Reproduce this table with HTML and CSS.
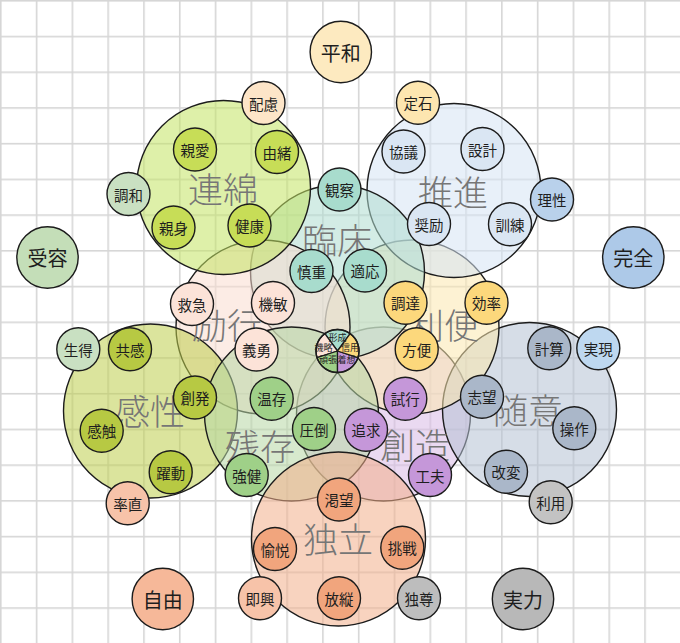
FILE: index.html
```html
<!DOCTYPE html>
<html lang="ja">
<head>
<meta charset="utf-8">
<title>価値観マップ</title>
<link rel="stylesheet" href="styles.css">
</head>
<body>
<main class="board">
<svg class="map" width="680" height="643" viewBox="0 0 680 643" xmlns="http://www.w3.org/2000/svg">
  <defs>
    <pattern id="grid" patternUnits="userSpaceOnUse" width="35.79" height="35.72">
      <rect class="gridline" x="0" y="0" width="1.6" height="35.72"/>
      <rect class="gridline" x="0" y="0" width="35.79" height="1.6"/>
    </pattern>
  </defs>
  <rect class="grid" x="0" y="0" width="680" height="643"/>

  <!-- category circles -->
  <g class="cats">
    <circle class="big f-sozo" cx="383.5" cy="414" r="87"/>
    <circle class="big f-zuii" cx="529.5" cy="409.5" r="87"/>
    <circle class="big f-riben" cx="412" cy="327" r="87"/>
    <circle class="big f-suishin" cx="454" cy="190.5" r="87"/>
    <circle class="big f-rinsho" cx="337.5" cy="272" r="87"/>
    <circle class="big f-reiko" cx="263" cy="327" r="87"/>
    <circle class="big f-renmen" cx="223.5" cy="187.5" r="87"/>
    <circle class="big f-kansei" cx="150.5" cy="411" r="87"/>
    <circle class="big f-zanson" cx="291.5" cy="414" r="87"/>
    <circle class="big f-dokuritsu" cx="338.5" cy="539" r="87"/>
  </g>

  <g class="cat-labels">
    <text class="t-big" x="223" y="187">連綿</text>
    <text class="t-big" x="453" y="190">推進</text>
    <text class="t-big" x="337" y="238">臨床</text>
    <text class="t-big" x="227" y="323">励行</text>
    <text class="t-big" x="444" y="323">利便</text>
    <text class="t-big" x="150" y="409">感性</text>
    <text class="t-big" x="528" y="408">随意</text>
    <text class="t-big" x="260" y="444">残存</text>
    <text class="t-big" x="415" y="443">創造</text>
    <text class="t-big" x="338" y="537">独立</text>
  </g>

  <!-- centre pie -->
  <g class="pie">
    <path class="slice p-teal" d="M337.5 351 L350.14 333.61 A21.5 21.5 0 0 0 324.86 333.61 Z"/>
    <path class="slice p-pink" d="M337.5 351 L324.86 333.61 A21.5 21.5 0 0 0 317.05 357.64 Z"/>
    <path class="slice p-green" d="M337.5 351 L317.05 357.64 A21.5 21.5 0 0 0 337.5 372.5 Z"/>
    <path class="slice p-purple" d="M337.5 351 L337.5 372.5 A21.5 21.5 0 0 0 357.95 357.64 Z"/>
    <path class="slice p-yellow" d="M337.5 351 L357.95 357.64 A21.5 21.5 0 0 0 350.14 333.61 Z"/>
    <circle class="pie-rim" cx="337.5" cy="351" r="21.5"/>
    <text class="t-pie" x="337.5" y="337.5">形成</text>
    <text class="t-pie" x="350" y="347.5">信用</text>
    <text class="t-pie" x="346.5" y="359.5">着想</text>
    <text class="t-pie" x="328" y="359.5">頑張</text>
    <text class="t-pie" x="323.5" y="347.5">機略</text>
  </g>

  <!-- value circles -->
  <g class="values">
    <circle class="sm c-lime" cx="195" cy="149.5" r="21.5"/><text class="t-sm" x="195" y="149.5">親愛</text>
    <circle class="sm c-lime" cx="277" cy="152" r="21.5"/><text class="t-sm" x="277" y="152">由緒</text>
    <circle class="sm c-lime" cx="173.5" cy="227.5" r="21.5"/><text class="t-sm" x="173.5" y="227.5">親身</text>
    <circle class="sm c-lime" cx="249.5" cy="225.5" r="21.5"/><text class="t-sm" x="249.5" y="225.5">健康</text>
    <circle class="sm c-peach" cx="263.5" cy="103" r="21.5"/><text class="t-sm" x="263.5" y="103">配慮</text>
    <circle class="sm c-sage" cx="128.5" cy="194" r="21.5"/><text class="t-sm" x="128.5" y="194">調和</text>

    <circle class="sm c-teal" cx="339.5" cy="189.5" r="21.5"/><text class="t-sm" x="339.5" y="189.5">観察</text>
    <circle class="sm c-teal" cx="311.5" cy="271" r="21.5"/><text class="t-sm" x="311.5" y="271">慎重</text>
    <circle class="sm c-teal" cx="365" cy="270.5" r="21.5"/><text class="t-sm" x="365" y="270.5">適応</text>

    <circle class="sm c-cream" cx="418" cy="102.7" r="21.5"/><text class="t-sm" x="418" y="102.7">定石</text>
    <circle class="sm c-sky" cx="403.5" cy="151.5" r="21.5"/><text class="t-sm" x="403.5" y="151.5">協議</text>
    <circle class="sm c-sky" cx="482.5" cy="149" r="21.5"/><text class="t-sm" x="482.5" y="149">設計</text>
    <circle class="sm c-sky" cx="429" cy="224" r="21.5"/><text class="t-sm" x="429" y="224">奨励</text>
    <circle class="sm c-sky" cx="510" cy="224.3" r="21.5"/><text class="t-sm" x="510" y="224.3">訓練</text>
    <circle class="sm c-blue" cx="552" cy="199.5" r="21.5"/><text class="t-sm" x="552" y="199.5">理性</text>

    <circle class="sm c-pink" cx="192" cy="304" r="21.5"/><text class="t-sm" x="192" y="304">救急</text>
    <circle class="sm c-pink" cx="273" cy="303" r="21.5"/><text class="t-sm" x="273" y="303">機敏</text>
    <circle class="sm c-pink" cx="256.5" cy="349.5" r="21.5"/><text class="t-sm" x="256.5" y="349.5">義勇</text>

    <circle class="sm c-yellow" cx="405.5" cy="302.7" r="21.5"/><text class="t-sm" x="405.5" y="302.7">調達</text>
    <circle class="sm c-yellow" cx="486.5" cy="302.7" r="21.5"/><text class="t-sm" x="486.5" y="302.7">効率</text>
    <circle class="sm c-yellow" cx="416.7" cy="349.3" r="21.5"/><text class="t-sm" x="416.7" y="349.3">方便</text>

    <circle class="sm c-sage" cx="78.3" cy="349.3" r="21.5"/><text class="t-sm" x="78.3" y="349.3">生得</text>
    <circle class="sm c-olive" cx="130" cy="349.3" r="21.5"/><text class="t-sm" x="130" y="349.3">共感</text>
    <circle class="sm c-olive" cx="195" cy="397.5" r="21.5"/><text class="t-sm" x="195" y="397.5">創発</text>
    <circle class="sm c-olive" cx="101.7" cy="430.7" r="21.5"/><text class="t-sm" x="101.7" y="430.7">感触</text>
    <circle class="sm c-olive" cx="170.7" cy="472.3" r="21.5"/><text class="t-sm" x="170.7" y="472.3">躍動</text>

    <circle class="sm c-green" cx="271.7" cy="398.7" r="21.5"/><text class="t-sm" x="271.7" y="398.7">温存</text>
    <circle class="sm c-green" cx="314" cy="429" r="21.5"/><text class="t-sm" x="314" y="429">圧倒</text>
    <circle class="sm c-green" cx="246.7" cy="475" r="21.5"/><text class="t-sm" x="246.7" y="475">強健</text>

    <circle class="sm c-purple" cx="405.3" cy="398.7" r="21.5"/><text class="t-sm" x="405.3" y="398.7">試行</text>
    <circle class="sm c-purple" cx="366" cy="429.7" r="21.5"/><text class="t-sm" x="366" y="429.7">追求</text>
    <circle class="sm c-purple" cx="430" cy="475" r="21.5"/><text class="t-sm" x="430" y="475">工夫</text>

    <circle class="sm c-slate" cx="549.3" cy="348.3" r="21.5"/><text class="t-sm" x="549.3" y="348.3">計算</text>
    <circle class="sm c-slate" cx="482" cy="396.7" r="21.5"/><text class="t-sm" x="482" y="396.7">志望</text>
    <circle class="sm c-slate" cx="574.3" cy="428.3" r="21.5"/><text class="t-sm" x="574.3" y="428.3">操作</text>
    <circle class="sm c-slate" cx="506" cy="471.7" r="21.5"/><text class="t-sm" x="506" y="471.7">改変</text>
    <circle class="sm c-lightblue" cx="598.3" cy="348.3" r="21.5"/><text class="t-sm" x="598.3" y="348.3">実現</text>
    <circle class="sm c-gray" cx="550.7" cy="502.3" r="21.5"/><text class="t-sm" x="550.7" y="502.3">利用</text>

    <circle class="sm c-apricot" cx="127.7" cy="503.3" r="21.5"/><text class="t-sm" x="127.7" y="503.3">率直</text>
    <circle class="sm c-salmon" cx="339" cy="499.5" r="21.5"/><text class="t-sm" x="339" y="499.5">渇望</text>
    <circle class="sm c-salmon" cx="275" cy="549" r="21.5"/><text class="t-sm" x="275" y="549">愉悦</text>
    <circle class="sm c-salmon" cx="402.3" cy="547.7" r="21.5"/><text class="t-sm" x="402.3" y="547.7">挑戦</text>
    <circle class="sm c-salmon" cx="339" cy="598.3" r="21.5"/><text class="t-sm" x="339" y="598.3">放縦</text>
    <circle class="sm c-apricot" cx="260" cy="598.3" r="21.5"/><text class="t-sm" x="260" y="598.3">即興</text>
    <circle class="sm c-gray2" cx="419" cy="598.3" r="21.5"/><text class="t-sm" x="419" y="598.3">独尊</text>
  </g>

  <!-- outer anchors -->
  <g class="anchors">
    <circle class="sm c-heiwa" cx="340.8" cy="52" r="30.7"/><text class="t-corner" x="340.8" y="52">平和</text>
    <circle class="sm c-juyo" cx="47.5" cy="257.5" r="30.7"/><text class="t-corner" x="47.5" y="257.5">受容</text>
    <circle class="sm c-kanzen" cx="633.3" cy="257.5" r="30.7"/><text class="t-corner" x="633.3" y="257.5">完全</text>
    <circle class="sm c-jiyu" cx="162.8" cy="599" r="30.7"/><text class="t-corner" x="162.8" y="599">自由</text>
    <circle class="sm c-jitsuryoku" cx="523" cy="599" r="30.7"/><text class="t-corner" x="523" y="599">実力</text>
  </g>
</svg>
</main>
</body>
</html>
```
FILE: styles.css
```css
html, body {
  margin: 0;
  padding: 0;
  background: #ffffff;
}

.board {
  width: 680px;
  height: 643px;
  overflow: hidden;
}

.map {
  display: block;
  font-family: "Noto Sans CJK JP", "Noto Sans", sans-serif;
}

.grid { fill: url(#grid); }
.gridline { fill: #d6d6d6; }

/* category circles */
.big {
  stroke: #1c1c1c;
  stroke-width: 1.4;
  fill-opacity: 0.55;
}
.f-renmen    { fill: rgb(195, 228, 99); }
.f-suishin   { fill: rgb(213, 228, 244); }
.f-rinsho    { fill: rgb(175, 220, 208); }
.f-reiko     { fill: rgb(250, 220, 208); }
.f-riben     { fill: rgb(251, 231, 175); }
.f-kansei    { fill: rgb(190, 206, 77); }
.f-zanson    { fill: rgb(182, 215, 164); }
.f-sozo      { fill: rgb(217, 186, 230); }
.f-zuii      { fill: rgb(180, 193, 211); }
.f-dokuritsu { fill: rgb(242, 175, 139); }

text {
  text-anchor: middle;
  dominant-baseline: central;
}

.t-big {
  font-size: 35px;
  font-weight: 300;
  fill: #767676;
}
.t-sm {
  font-size: 14.5px;
  fill: #1e1e1e;
}
.t-corner {
  font-size: 20px;
  fill: #1e1e1e;
}
.t-pie {
  font-size: 9px;
  fill: #1e1e1e;
}

/* pie */
.slice {
  stroke: #1c1c1c;
  stroke-width: 1.3;
}
.pie-rim {
  fill: none;
  stroke: #1c1c1c;
  stroke-width: 1.4;
}
.p-teal   { fill: #a8dccd; }
.p-pink   { fill: #fce3d8; }
.p-green  { fill: #9fd088; }
.p-purple { fill: #c597d9; }
.p-yellow { fill: #fcd87c; }

/* value circles */
.sm {
  stroke: #1c1c1c;
  stroke-width: 1.4;
}
.c-lime      { fill: #c7dd57; }
.c-peach     { fill: #fde5c8; }
.c-sage      { fill: #c9e0c2; }
.c-teal      { fill: #a8dccd; }
.c-cream     { fill: #fde6b0; }
.c-sky       { fill: #dae6f3; }
.c-blue      { fill: #b9d1eb; }
.c-pink      { fill: #fce3d8; }
.c-yellow    { fill: #fcd87c; }
.c-olive     { fill: #b7c943; }
.c-green     { fill: #9fd088; }
.c-purple    { fill: #c597d9; }
.c-slate     { fill: #aab7c9; }
.c-lightblue { fill: #bed8f0; }
.c-gray      { fill: #c3c3c3; }
.c-gray2     { fill: #bdbdbd; }
.c-apricot   { fill: #f7c3a9; }
.c-salmon    { fill: #f1a57d; }

.c-heiwa      { fill: #fdeac0; }
.c-juyo       { fill: #c4deb8; }
.c-kanzen     { fill: #adc9e8; }
.c-jiyu       { fill: #f6b899; }
.c-jitsuryoku { fill: #b8b8b8; }
```
